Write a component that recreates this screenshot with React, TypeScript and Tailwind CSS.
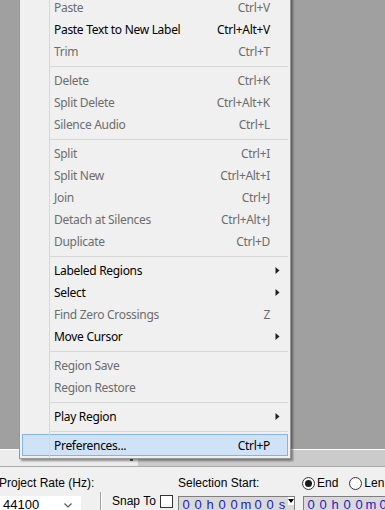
import React from "react";

type Entry = { label: string; shortcut?: string; on?: boolean; sub?: boolean; hot?: boolean } | null;

const entries: Entry[] = [
  { label: "Paste", shortcut: "Ctrl+V" },
  { label: "Paste Text to New Label", shortcut: "Ctrl+Alt+V", on: true },
  { label: "Trim", shortcut: "Ctrl+T" },
  null,
  { label: "Delete", shortcut: "Ctrl+K" },
  { label: "Split Delete", shortcut: "Ctrl+Alt+K" },
  { label: "Silence Audio", shortcut: "Ctrl+L" },
  null,
  { label: "Split", shortcut: "Ctrl+I" },
  { label: "Split New", shortcut: "Ctrl+Alt+I" },
  { label: "Join", shortcut: "Ctrl+J" },
  { label: "Detach at Silences", shortcut: "Ctrl+Alt+J" },
  { label: "Duplicate", shortcut: "Ctrl+D" },
  null,
  { label: "Labeled Regions", on: true, sub: true },
  { label: "Select", on: true, sub: true },
  { label: "Find Zero Crossings", shortcut: "Z" },
  { label: "Move Cursor", on: true, sub: true },
  null,
  { label: "Region Save" },
  { label: "Region Restore" },
  null,
  { label: "Play Region", on: true, sub: true },
  null,
  { label: "Preferences...", shortcut: "Ctrl+P", on: true, hot: true },
];

function SubArrow() {
  return (
    <svg width="5" height="7" viewBox="0 0 5 7">
      <path d="M0.5 0 L4.5 3.5 L0.5 7 Z" fill="#222" />
    </svg>
  );
}

function MenuRow({ e }: { e: NonNullable<Entry> }) {
  return (
    <div
      className={`relative flex h-[22px] items-center pl-[32px] pt-[1px] ${e.sub ? "pr-[8px]" : "pr-[18px]"} ${
        e.on ? "text-black" : "text-[#6d6d6d]"
      }`}
    >
      {e.hot ? <div className="absolute inset-0 border border-[#84b4e4] bg-[#d0e3f6]" /> : null}
      <span className="relative flex-1 whitespace-nowrap">{e.label}</span>
      {e.shortcut ? <span className="relative whitespace-nowrap">{e.shortcut}</span> : null}
      {e.sub ? (
        <span className="relative flex">
          <SubArrow />
        </span>
      ) : null}
    </div>
  );
}

function Separator() {
  return (
    <div className="h-[7px] pl-[28px] pt-[4px]">
      <div className="h-px bg-[#d7d7d7]" />
    </div>
  );
}

function TimeBox({ chars, arrow }: { chars: string[]; arrow?: boolean }) {
  return (
    <div
      className={`flex h-[18px] shrink-0 border border-[#7f7f7f] bg-[#d9d9d9] pl-[1px] font-['Liberation_Sans',Arial,sans-serif] text-[13px] leading-[16px] text-[#1c1cc0] ${
        arrow ? "w-[117px]" : "w-[90px]"
      }`}
    >
      {chars.map((c, i) => (
        <span key={i} className="w-[12px] shrink-0 text-center">
          {c}
        </span>
      ))}
      {arrow ? (
        <span className="flex h-[8px] w-[6px] shrink-0 items-center justify-center bg-white">
          <svg width="6" height="4" viewBox="0 0 6 4">
            <path d="M0 0 H6 L3 4 Z" fill="#000" />
          </svg>
        </span>
      ) : null}
    </div>
  );
}

function Radio({ checked }: { checked?: boolean }) {
  return (
    <span className="flex h-[13px] w-[13px] shrink-0 items-center justify-center rounded-full border border-[#333] bg-white">
      {checked ? <span className="h-[7px] w-[7px] rounded-full bg-[#1a1a1a]" /> : null}
    </span>
  );
}

export default function App() {
  const digits = ["0", "0", "h", "0", "0", "m", "0", "0", "s"];
  return (
    <div className="relative h-[510px] w-[385px] overflow-hidden bg-[#f0f0f0]">
      <div className="h-[449px] bg-[#a0a0a0]" />
      <div className="h-px bg-white" />
      <div className="flex h-[16px]">
        <div className="relative w-[138px] bg-[#ececec]">
          <span className="absolute left-[130px] top-[9px] h-[2px] w-[3px] bg-[#555]" />
        </div>
        <div className="flex-1 bg-[#cbcbcb]" />
      </div>
      <div className="h-px bg-[#a8a8a8]" />

      {/* selection toolbar */}
      <div className="flex h-[43px] pt-[9px] font-['Liberation_Sans',Arial,sans-serif] text-[12px] text-black">
        <div className="ml-[-1px] flex w-[101px] shrink-0 flex-col">
          <div className="h-[14px] whitespace-nowrap leading-[14px]">Project Rate (Hz):</div>
          <div className="mt-[6px] flex h-[18px] w-[82px] items-center justify-between bg-white pl-[4px] pr-[9px] text-[13px]">
            <span>44100</span>
            <svg width="8" height="5" viewBox="0 0 8 5">
              <path d="M0.5 0.5 L4 4 L7.5 0.5" fill="none" stroke="#555" strokeWidth="1.2" />
            </svg>
          </div>
        </div>

        <div className="flex w-[78px] shrink-0 flex-col justify-end">
          <div className="flex h-[18px] items-center">
            <div className="h-full w-px bg-[#a0a0a0]" />
            <div className="h-full w-px bg-white" />
            <span className="ml-[10px] whitespace-nowrap leading-[14px]">Snap To</span>
            <span className="ml-[4px] h-[13px] w-[13px] shrink-0 border border-[#333] bg-white" />
          </div>
        </div>

        <div className="flex shrink-0 flex-col">
          <div className="h-[14px] whitespace-nowrap leading-[14px]">Selection Start:</div>
          <div className="mt-[6px]">
            <TimeBox chars={digits} arrow />
          </div>
        </div>

        <div className="ml-[7px] flex shrink-0 flex-col">
          <div className="flex h-[14px] items-center whitespace-nowrap leading-[14px]">
            <Radio checked />
            <span className="ml-[2px]">End</span>
            <span className="ml-[11px]">
              <Radio />
            </span>
            <span className="ml-[2px]">Len</span>
          </div>
          <div className="ml-[1px] mt-[6px]">
            <TimeBox chars={digits.slice(0, 7)} />
          </div>
        </div>
      </div>

      {/* Edit menu */}
      <div className="absolute left-[19px] top-[-7px] w-[272px] border border-[#979797] bg-[#f0f0f0] p-[2px] font-['Noto_Sans',sans-serif] text-[12px] tracking-[-0.3px] shadow-[2px_2px_2px_rgba(0,0,0,0.4)]">
        {entries.map((e, i) => (e ? <MenuRow key={i} e={e} /> : <Separator key={i} />))}
        <div className="absolute bottom-0 left-[29px] top-0 w-px bg-[#d7d7d7]" />
      </div>
    </div>
  );
}
